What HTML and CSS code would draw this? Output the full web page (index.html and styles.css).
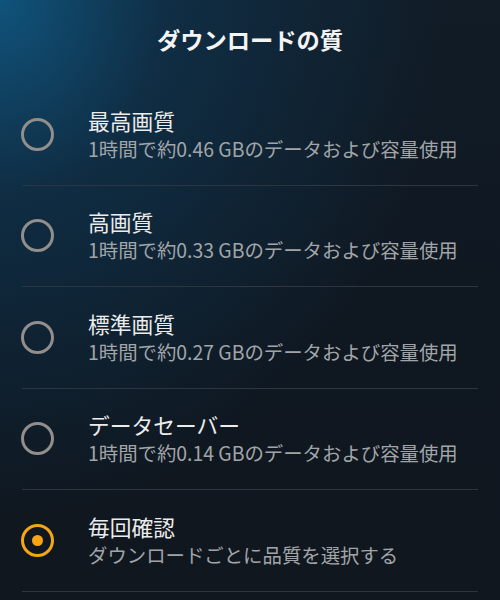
FILE: index.html
```html
<!DOCTYPE html>
<html lang="ja">
<head>
<meta charset="utf-8">
<link rel="stylesheet" href="styles.css">
</head>
<body>
<div class="screen">
  <header class="header">ダウンロードの質</header>
  <ul class="list">
    <li class="row">
      <span class="radio"></span>
      <div class="text">
        <div class="title">最高画質</div>
        <div class="sub">1時間で約0.46 GBのデータおよび容量使用</div>
      </div>
    </li>
    <li class="row">
      <span class="radio"></span>
      <div class="text">
        <div class="title">高画質</div>
        <div class="sub">1時間で約0.33 GBのデータおよび容量使用</div>
      </div>
    </li>
    <li class="row">
      <span class="radio"></span>
      <div class="text">
        <div class="title">標準画質</div>
        <div class="sub">1時間で約0.27 GBのデータおよび容量使用</div>
      </div>
    </li>
    <li class="row">
      <span class="radio"></span>
      <div class="text">
        <div class="title">データセーバー</div>
        <div class="sub">1時間で約0.14 GBのデータおよび容量使用</div>
      </div>
    </li>
    <li class="row">
      <span class="radio checked"></span>
      <div class="text">
        <div class="title">毎回確認</div>
        <div class="sub">ダウンロードごとに品質を選択する</div>
      </div>
    </li>
  </ul>
</div>
</body>
</html>
```
FILE: styles.css
```css
html, body {
  margin: 0;
  padding: 0;
}
body {
  width: 500px;
  height: 600px;
  overflow: hidden;
  background: #0f1720;
  font-family: "Noto Sans CJK JP", "Noto Sans", sans-serif;
}
.screen {
  width: 500px;
  height: 600px;
  background:
    radial-gradient(ellipse 440px 520px at 0px 0px, rgba(16, 86, 128, 0.95) 0%, rgba(14, 60, 92, 0.55) 38%, rgba(15, 23, 32, 0) 100%),
    linear-gradient(180deg, #111c27 0%, #0f1720 60%, #10171f 100%);
}
.header {
  height: 84px;
  box-sizing: border-box;
  padding-top: 22px;
  text-align: center;
  color: #f4f4f4;
  font-size: 23.25px;
  font-weight: 700;
  line-height: 34px;
}
.list {
  list-style: none;
  margin: 0 22px;
  padding: 0;
}
.row {
  height: 100.5px;
  border-bottom: 1px solid #2c3540;
  display: flex;
  align-items: center;
}
.radio {
  flex: none;
  width: 27px;
  height: 27px;
  border: 3px solid #918e8c;
  border-radius: 50%;
  margin-left: -1px;
  margin-right: 34px;
  position: relative;
}
.radio.checked {
  border-color: #f5a614;
}
.radio.checked::after {
  content: "";
  position: absolute;
  left: 50%;
  top: 50%;
  width: 11px;
  height: 11px;
  margin: -5.5px 0 0 -5.5px;
  border-radius: 50%;
  background: #f5a614;
}
.text {
  display: flex;
  flex-direction: column;
  padding-top: 1px;
}
.title {
  color: #ececec;
  font-size: 21.75px;
  line-height: 28px;
}
.sub {
  color: #a2a5a8;
  font-size: 19.4px;
  line-height: 28px;
}
```
